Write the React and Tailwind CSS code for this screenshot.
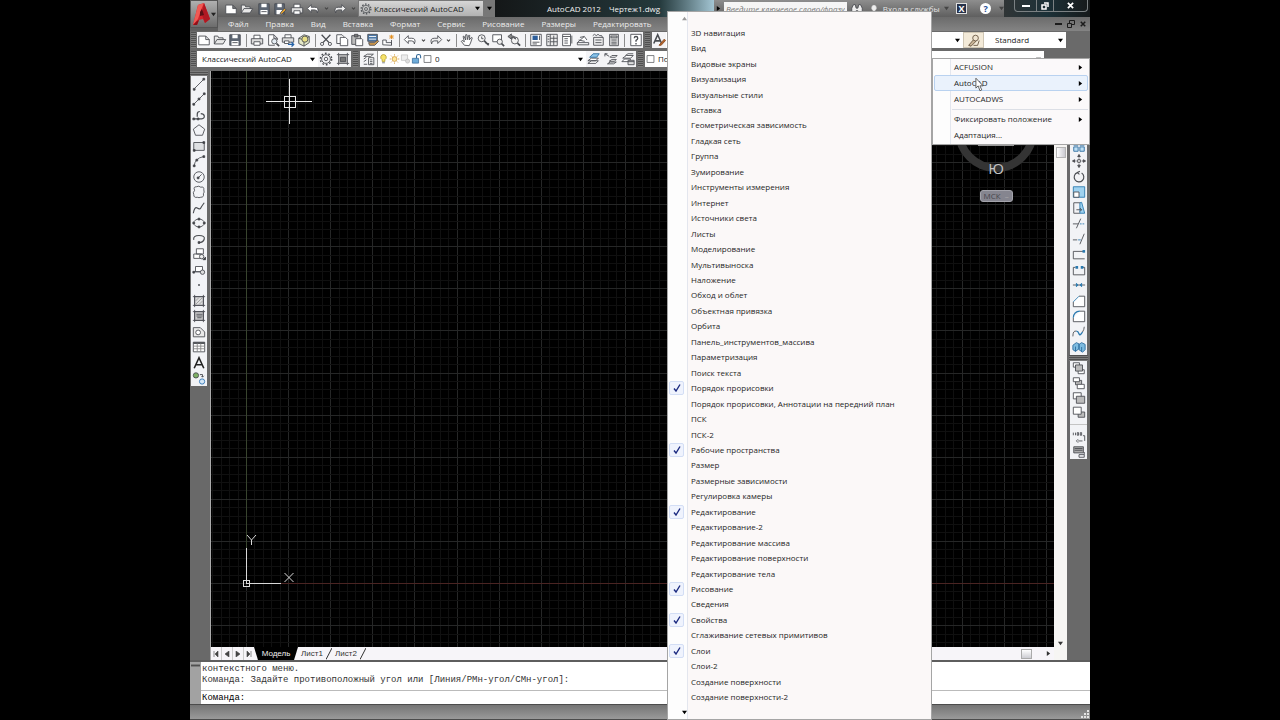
import { ChevronDown } from 'lucide-react';

/**
 * Classic AutoCAD workspace with the toolbar context menu opened
 * over the drawing area.
 */

const ICONS = {
  blank: <path d="M2 3.5h8l4 4v6H2zM10 3.5v4h4" fill="#fff" />,
  open: <path d="M1.5 12.5v-9h4l1 2h5v2M1.5 12.5l3-5h10l-3 5z" fill="#e8e8e8" />,
  save: <><path d="M2 2h12v12H2z" fill="#5d6673" /><path d="M5 2h6v4H5zM4 9h8v5H4z" fill="#fff" stroke="none" /><path d="M5 11h6" /></>,
  saveAs: <><path d="M2 2h11v12H2z" fill="#5d6673" /><path d="M5 2h5v4H5zM4 9h7v5H4z" fill="#fff" stroke="none" /><path d="M8 13l5-6 2 2-5 5z" fill="#e0a030" /></>,
  print: <><path d="M4.5 7V2.5h7V7" fill="#fff" /><path d="M1.5 6.5h13v6h-13z" fill="#ddd" /><path d="M4.5 10h7v4h-7z" fill="#fff" /></>,
  preview: <><path d="M10 14H3V2h6l4 4v2M9 2v4h4" fill="#fff" /><circle cx="9.500" cy="9.500" r="3" fill="#e6eef5" /><path d="M12 12l3 3" strokeWidth="2" /></>,
  plot: <><path d="M4.500 6V2h7v4" fill="#fff" /><path d="M1.500 5.500h13v5h-13z" fill="#ddd" /><path d="M4 9h5v3H4z" fill="#fff" /><path d="M8 13h6M12 10.500l2.500 2.500-2.500 2.500" stroke="#2563a8" strokeWidth="1.500" /></>,
  dwf: <><path d="M2 6l6-4 6 2v7l-6 4-6-3z" fill="#e5e9c8" /><path d="M2 6l6 2 6-4M8 8v7" /><circle cx="9" cy="7" r="3.500" fill="#e9df85" /></>,
  cut: <><path d="M3 2l8.500 9M13 2L4.500 11" strokeWidth="1.500" /><circle cx="3.500" cy="12.500" r="1.800" /><circle cx="12.500" cy="12.500" r="1.800" /></>,
  copy: <><path d="M2 2h6l2 2v8H2z" fill="#fff" /><path d="M6 5h6l2.500 2.500V14.500H6z" fill="#fff" /></>,
  paste: <><path d="M2 3h10v10H2z" fill="#bbb" /><path d="M5 1.500h4v3H5z" fill="#777" /><path d="M6.500 6.500h7l1 1v7h-8z" fill="#fff" /></>,
  match: <><path d="M2 1.500h11v8H2z" fill="#4c79a8" /><path d="M3.500 4h8M3.500 7h8" stroke="#fff" /><path d="M3 11h7l3-3 1.500 1.500L10 14H4z" fill="#d49a48" /></>,
  block: <><path d="M2 13.500V8h4v3h6v3zM12 8v6" fill="#fff" /><path d="M12 2v5M9.500 4.500h5M10 2.500l4 4M14 2.500l-4 4" stroke="#e08a18" /></>,
  undo: <path d="M6 3L1.500 7.500 6 12V9h4q3 0 3 3.500Q15.500 6 10 6H6z" fill="#fff" />,
  redo: <path d="M10 3l4.500 4.500L10 12V9H6q-3 0-3 3.500Q.5 6 6 6h4z" fill="#eee" />,
  pan: <path d="M5 14L1.500 9.500l1-1L5 10 3.500 4l1-.5L6.500 8 6.500 2h1.500l.5 5.500L10 2.500l1.200.3-.7 5.200L13 5l1 .5-2 6-1.500 3z" fill="#fff" />,
  zoom: <><circle cx="6.500" cy="6" r="4" fill="#f4f4f4" /><path d="M9.500 9l5 5" strokeWidth="2" /><path d="M6.500 4v2.500h2M11 12h4" /></>,
  zoomWindow: <><path d="M2 2h10v8H2z" fill="#fff" /><circle cx="10" cy="10" r="3" fill="#eee" /><path d="M12 12l3 3" strokeWidth="2" /></>,
  zoomPrev: <><circle cx="9" cy="8.500" r="4" fill="#f4f4f4" /><path d="M12 11.500l3 3" strokeWidth="2" /><path d="M1 4l4-3v2q4 0 5 4-2-2-5-2v2z" fill="#888" /></>,
  props: <><path d="M2 1.500h12v13H2z" fill="#fff" /><path d="M4 3h6v5H4z" fill="#2d5e9b" stroke="none" /><path d="M4 10.500h8M4 12.500h5M12 3v5" /></>,
  design: <><path d="M2 1.500h12v13H2z" fill="#ececec" /><path d="M6 1.500v13M6 6h8M6 10h8M10 3v11M3 4h2M3 7h2M3 10h2" /></>,
  palette: <><path d="M3 1.500h9v13H3zM3 4h9" fill="#fff" /><path d="M5 6.500h4M5 9h4M5 11.500h4M13.500 3v9" /></>,
  sheet: <path d="M1.500 11l8-7 3 4M1.500 11h13v2.500h-13zM3 8l7 1.500M9.500 4l-5 1" fill="#fff" />,
  markup: <><path d="M3 5h11v9H3z" fill="#eee" /><path d="M2 3q2-3 4 0 2-3 4 0 3-1 3 2M5 8h7M5 11h7" /></>,
  calc: <><path d="M3 1.500h10v13H3z" fill="#ddd" /><path d="M4.500 3.500h7v2h-7zM5 8h6M5 10.500h6M5 12.500h6" /></>,
  help: <><path d="M2 1.500h12v13H2z" fill="#fff" /><path d="M6 6q0-2 2-2t2 2q0 1.500-2 2.500v1.500M8 11.500v1.500" strokeWidth="1.500" /></>,
  textStyle: <><path d="M2 12L6.500 2 11 12M3.500 9h6" strokeWidth="1.800" /><path d="M8 14l6-7 1.500 1.500-5 5.500z" fill="#b5652b" stroke="#8b4a20" /></>,
  gear: <><circle cx="8" cy="8" r="5" strokeWidth="1" /><circle cx="8" cy="8" r="6.500" strokeDasharray="2 2.080" strokeWidth="1.600" /><circle cx="8" cy="8" r="2" /></>,
  wsSave: <><path d="M3 3h10v10H3z" fill="#bbb" /><path d="M5 6h6v5H5z" fill="#777" /><path d="M1 3h2M1 13h2M13 3h2M13 13h2M3 1v2M13 1v2M3 13v2M13 13v2" /></>,
  layers: <><path d="M2 5l4-2.500h7L10 5zM2 8l3-2M2 11l3-2M2 14h4" fill="#fff" /><path d="M7.500 6.500h6v8h-6zM9 9h3M9 11h3M9 13h3" fill="#fff" /></>,
  bulb: <><path d="M8 1.500a4 4 0 0 1 2 7.500v2.500H6V9a4 4 0 0 1 2-7.500z" fill="#f6e36b" stroke="#a88f20" /><path d="M6 13.500h4" /></>,
  sun: <><circle cx="8" cy="8" r="3.500" fill="#ffe9a0" stroke="#c98a25" /><path d="M8 1v2M8 13v2M1 8h2M13 8h2M3 3l1.500 1.500M11.500 11.500L13 13M3 13l1.500-1.500M11.500 4.500L13 3" stroke="#c98a25" /></>,
  freeze: <><path d="M2 2h9v8H2z" fill="#eee" stroke="#bbb" /><circle cx="11" cy="11" r="3" fill="#ddd" stroke="#bbb" /></>,
  lock: <><path d="M2 7h9v7H2z" fill="#6eabd8" stroke="#2d6393" /><path d="M8 7V4q0-2.500 3-2.500T14 4v3" stroke="#2d6393" strokeWidth="1.500" /></>,
  square: <path d="M3 3h10v10H3z" fill="#fff" />,
  layerBlue: <><path d="M1 13l4-3h8l-3 3zM1 10l4-3h8l-3 3z" fill="#fff" /><path d="M3 6l4-4h7l-3 4z" fill="#8cc5ea" stroke="#2a6b9e" /></>,
  layerPrev: <><path d="M4 13.500l3-2h7l-3 2zM6 10.500l3-2h5l-2 2zM7 6l2-2h6l-2 2z" fill="#fff" /><path d="M1 2l5 3M1 2h3M1 2v3" /></>,
  layerState: <><path d="M1 11l3-3h7l-2 3zM2 7l4-3h8l-3 3zM5 4l3-2h6" fill="#fff" /><path d="M8 9.500h7v5H8zM8 11h7" fill="#ddd" /></>,
  line: <><path d="M3 13L13 3" /><path d="M1.500 13h2v2h-2zM12.500 1.500h2v2h-2z" fill="#333" /></>,
  xline: <><path d="M2 14L14 2" /><path d="M1 13h2v2H1zM7 7h2v2H7zM13 1h2v2h-2z" fill="#333" /></>,
  pline: <><path d="M2 12.500h9q3.500-.5 3-3.500-.5-2.500-4-2.500M6 10V7Q6 4 9 4" strokeWidth="1.400" /><path d="M1 11.500h2v2H1zM6 11.500h2v2H6z" fill="#333" /></>,
  polygon: <path d="M8 2l6.500 5-2.500 7H4L1.500 7z" />,
  rect: <><path d="M2 4h12v9H2z" fill="#dfe1e3" /><path d="M1.500 12h2v2h-2zM12.500 3h2v2h-2z" fill="#333" /></>,
  arc: <><path d="M2.500 14Q3 5 13 3" /><path d="M1.500 12.500h2v2h-2zM4.500 6h2v2h-2zM12.500 2h2v2h-2z" fill="#333" /></>,
  circle: <><circle cx="8" cy="8" r="6" /><path d="M7 9l4-4" /><path d="M6 8h2v2H6z" fill="#333" /></>,
  cloud: <path d="M3 6q-2-4 2-4 3-1.500 5 .5 4-1 3.500 3 1 3-.5 4.500 1 4-3 4-2 1-4 0-4 1-4-3-1.500-2 1-5z" />,
  spline: <path d="M1.500 14Q3 6 6 8t4 0 4-6" strokeWidth="1.300" />,
  ellipse: <><ellipse cx="8" cy="8" rx="6" ry="4.500" /><path d="M1 7h2v2H1zM13 7h2v2h-2zM7 2.500h2v2H7zM7 11.500h2v2H7z" fill="#333" /></>,
  ellipseArc: <><path d="M2 9Q1 4 8 4t6 4-6 4" strokeWidth="1.300" /><path d="M7 11h2v2H7z" fill="#333" /></>,
  insert: <><path d="M5 2h8v6H5zM2 8h9v5H2z" fill="#fff" /><circle cx="11" cy="11" r="2.500" fill="#eee" /><path d="M12.500 14.500h3v-3z" fill="#000" /></>,
  makeBlock: <><path d="M4 4h8v6H4zM1.500 10h8" fill="#fff" /><circle cx="12" cy="10.500" r="2.500" fill="#ddd" /><path d="M1 9.500h2v2H1z" fill="#333" /></>,
  point: <path d="M7.500 7.500h1v1h-1z" fill="#333" />,
  hatch: <><path d="M3 3h10v10H3z" fill="#ddd" /><path d="M1 3h14M1 13h14M3 1v14M13 1v14" /><path d="M4 8l4-4M4 12l8-8M8 12l4-4" stroke="#999" /></>,
  gradient: <><path d="M3 3h10v10H3z" fill="#ccc" /><path d="M1 3h14M1 13h14M3 1v14M13 1v14M5 6h7M5 8h7M6 10h5" /></>,
  region: <><path d="M1.500 3h8l5 5v5.500h-13z" fill="#e9e9e9" /><circle cx="7" cy="8.500" r="2.700" fill="#fff" /></>,
  table: <><path d="M1.500 2.500h13v11h-13z" fill="#fff" /><path d="M1.500 3.500h13" strokeWidth="2" /><path d="M1.500 7h13M1.500 10h13M6 4v9.500M10 4v9.500" stroke="#888" /></>,
  text: <path d="M2.500 14L8 2l5.500 12M4.500 10h7" strokeWidth="1.800" stroke="#222" />,
  addSelected: <><circle cx="4.500" cy="5" r="3" fill="#7db064" /><circle cx="11.500" cy="12" r="3" fill="#d7e9f8" stroke="#2d74b5" /><path d="M9 4h3v3M10.500 5.500L12 7l1.500-1.500" /></>,
  array: <path d="M2 2h5v5H2zM9 2h5v5H9zM2 9h5v5H2zM9 9h5v5H9z" fill="#bfe0f5" stroke="#2a6b9e" />,
  move: <><path d="M8 2v12M2 8h12" strokeDasharray="2 1" /><path d="M8 .5L9.500 3h-3zM8 15.500L9.500 13h-3zM.5 8L3 6.500v3zM15.500 8L13 6.500v3z" fill="#333" /><path d="M6.500 6.500h3v3h-3z" fill="#fff" /></>,
  rotate: <path d="M6 3a5.500 5.500 0 1 0 5 0.500M6 3l3-1.500M6 3l2.500 2" strokeWidth="1.300" />,
  scale: <><path d="M1.500 2h13v12h-13z" fill="#9fd2f0" stroke="#2a7ab0" /><path d="M2 8h6v6H2z" fill="#fff" /></>,
  stretch: <><path d="M9 2l2-.5L14.500 14H9z" fill="#9fd2f0" stroke="#2a7ab0" /><path d="M9 2H2v12h7M5 10h6M9 8l2 2-2 2" /></>,
  trim: <><path d="M1 9h6M5 14L10 3" /><path d="M9 9h2M12 9h2" stroke="#2a7ab0" /></>,
  extend: <><path d="M1 9h5M9 14l5-12" /><path d="M7 9h3" stroke="#2a7ab0" /></>,
  breakAt: <><path d="M1.500 13.500V5H14M1.500 13.500h13" /><path d="M12 3.500h3v3h-3z" fill="#2a7ab0" stroke="none" /></>,
  breakLine: <><path d="M4 5H1.500v8.500h13V5H12" /><path d="M4 3.500h3v3H4zM10 3.500h3v3h-3z" fill="#2a7ab0" stroke="none" /></>,
  join: <><path d="M1 8h14" /><path d="M5 6L7 8l-2 2zM11 6L9 8l2 2z" fill="#2a7ab0" stroke="#2a7ab0" /></>,
  chamfer: <><path d="M8 2.500h6.500v12h-13V9" fill="#fff" /><path d="M1.500 9L8 2.500" stroke="#2a7ab0" /></>,
  fillet: <><path d="M9 2.500h5.500v12h-13V10" fill="#fff" /><path d="M1.500 10Q2 3 9 2.500" stroke="#2a7ab0" strokeWidth="1.300" /></>,
  blend: <><path d="M1 13q0-7 4-6" /><path d="M5 7q2 0 3 3t4-2" stroke="#2a7ab0" strokeWidth="1.500" /><path d="M12 8q2-3 2-6" /></>,
  explode: <path d="M1 6l4-3 3 1.500V10l-4 3-3-2zM8 5l3-2 4 2v6l-3 3-4-3zM11 8v5M4 7.500V13" fill="#7dbbe0" stroke="#2a6b9e" />,
  front: <><path d="M1.500 2h7v5h-7zM7 10h7v4.500H7z" fill="#fff" /><path d="M4 4.500h8v7H4z" fill="#bbb" /></>,
  back: <><path d="M4 5h7v5H4z" fill="#bbb" /><path d="M1.500 2h7v4.500h-7zM6 9.500h8v5H6z" fill="#fff" /></>,
  above: <><path d="M1.500 2h9v7h-9z" fill="#fff" /><path d="M5 6h9.500v8H5z" fill="#bbb" /></>,
  under: <><path d="M7 8h7.500v6H7z" fill="#bbb" /><path d="M1.500 2.500h9v8h-9z" fill="#fff" /></>,
  annoFront: <><path d="M1.500 3v3M4 3v3M6 3h1.500v3H6zM9.500 3H11v3H9.500z" /><path d="M12.500 6.500h2v6M7 12.500h5M7 10.500l-2 2 2 2" /></>,
  hatchBack: <><path d="M2 2h11v7H2z" fill="#aaa" /><path d="M3 4h9M3 6h9M8 11h6v3H8zM14 8v3" /></>,
  binoculars: <path d="M2 13V7l2-4h2l1 4h2l1-4h2l2 4v6H9v-3H7v3z" fill="#eee" />,
  key: <path d="M5 7a3 4 0 1 1 6 0q0 2-2 3v4H7v-4Q5 9 5 7z" fill="#eee" stroke="#ddd" />,
};

const QUICK = ['blank', 'open', 'save', 'saveAs', 'print', 'undo', '>', 'redo', '>'];
const STANDARD = [
  'blank', 'open', 'save', '|', 'print', 'preview', 'plot', 'dwf', '|',
  'cut', 'copy', 'paste', 'match', 'block', '|', 'undo', '>', 'redo', '>', '|',
  'pan', 'zoom', 'zoomWindow', 'zoomPrev', '|',
  'props', 'design', 'palette', 'sheet', 'markup', 'calc', '|', 'help',
];
const DRAW = [
  'line', 'xline', 'pline', 'polygon', 'rect', 'arc', 'circle', 'cloud', 'spline', 'ellipse',
  'ellipseArc', 'insert', 'makeBlock', 'point', 'hatch', 'gradient', 'region', 'table', 'text', 'addSelected',
];
const MODIFY = [
  'cut', 'copy', 'front', 'back', 'array', 'move', 'rotate', 'scale', 'stretch', 'trim',
  'extend', 'breakAt', 'breakLine', 'join', 'chamfer', 'fillet', 'blend', 'explode',
];
const ORDER = ['front', 'back', 'above', 'under', '-', 'annoFront', 'hatchBack'];

const MENUBAR = ['Файл', 'Правка', 'Вид', 'Вставка', 'Формат', 'Сервис', 'Рисование', 'Размеры', 'Редактировать', 'Параметры'];

const TOOLBARS = [
  '3D навигация', 'Вид', 'Видовые экраны', 'Визуализация', 'Визуальные стили', 'Вставка',
  'Геометрическая зависимость', 'Гладкая сеть', 'Группа', 'Зумирование', 'Инструменты измерения',
  'Интернет', 'Источники света', 'Листы', 'Моделирование', 'Мультивыноска', 'Наложение',
  'Обход и облет', 'Объектная привязка', 'Орбита', 'Панель_инструментов_массива', 'Параметризация',
  'Поиск текста', 'Порядок прорисовки', 'Порядок прорисовки, Аннотации на передний план', 'ПСК',
  'ПСК-2', 'Рабочие пространства', 'Размер', 'Размерные зависимости', 'Регулировка камеры',
  'Редактирование', 'Редактирование-2', 'Редактирование массива', 'Редактирование поверхности',
  'Редактирование тела', 'Рисование', 'Сведения', 'Свойства', 'Сглаживание сетевых примитивов',
  'Слои', 'Слои-2', 'Создание поверхности', 'Создание поверхности-2',
];
const CHECKED = ['Порядок прорисовки', 'Рабочие пространства', 'Редактирование', 'Рисование', 'Свойства', 'Слои'];

function Glyph({ name, className = 'h-[14px] w-[14px]' }) {
  return (
    <svg viewBox="0 0 16 16" className={`shrink-0 ${className}`} fill="none" stroke="#4a4d52" strokeWidth="1" aria-hidden>
      {ICONS[name]}
    </svg>
  );
}

function Triangle({ className = '', points = '0,1 6,1 3,5' }) {
  return (
    <svg viewBox="0 0 6 6" className={`h-[5px] w-[5px] shrink-0 ${className}`} fill="currentColor" aria-hidden>
      <polygon points={points} />
    </svg>
  );
}

function Tool({ name }) {
  if (name === '|') {
    return <span className="flex w-[5px] justify-center"><span className="h-[13px] w-px bg-[#8c8c8c]" /></span>;
  }
  if (name === '-') return <span className="my-1 h-px w-full bg-[#c4c4c4]" />;
  if (name === '>') {
    return (
      <button type="button" aria-label="more" className="flex w-2 justify-center text-[#444]">
        <ChevronDown size={5} strokeWidth={5} />
      </button>
    );
  }
  return (
    <button type="button" aria-label={name} className="flex items-center justify-center">
      <Glyph name={name} />
    </button>
  );
}

function Gripper({ className = 'h-[16px] w-[5px]' }) {
  return <span className={`shrink-0 bg-[repeating-linear-gradient(0deg,#7c7c7c_0_1px,#505050_1px_2px)] ${className}`} />;
}

function Combo({ label, options, className = '', children }) {
  return (
    <label className={`flex h-full items-center pr-[3px] ${className}`}>
      {children}
      <select aria-label={label} className="h-full min-w-0 flex-1 appearance-none truncate bg-transparent pl-[2px] text-[8px] leading-[14px] text-[#222] outline-none">
        {options.map((o) => <option key={o}>{o}</option>)}
      </select>
      <Triangle className="text-black" />
    </label>
  );
}

function TitleBar() {
  return (
    <div className="flex h-[17px] items-center bg-linear-to-b from-[#8e8e8e] to-[#5f5f5f] text-[8px]">
      <div className="flex w-[139px] shrink-0 items-center justify-between pl-[6px]">
        {QUICK.map((name, i) => <Tool key={i} name={name} />)}
      </div>
      <Combo label="Рабочее пространство" options={['Классический AutoCAD']} className="ml-px w-[126px] border border-[#777] bg-linear-to-b from-[#d6d6d6] to-[#b2b2b2]">
        <Glyph name="gear" className="ml-px h-[12px] w-[12px]" />
      </Combo>
      <button type="button" aria-label="Настройка панели" className="flex h-full w-[11px] items-center justify-center bg-[#777] text-black"><Triangle /></button>
      <div className="flex h-full min-w-0 flex-1 items-center bg-linear-to-r from-[#141718] via-[#24393c] via-75% to-[#a4c6d4]">
        <h1 className="ml-[52px] flex gap-2 whitespace-nowrap text-[8px] text-[#f2f2f2]">
          <span>AutoCAD 2012</span>
          <span>Чертеж1.dwg</span>
        </h1>
      </div>
      <div className="flex h-full w-[290px] shrink-0 items-center bg-linear-to-b from-[#8e8e8e] to-[#5f5f5f] text-[#e4e4e4]">
        <Triangle className="ml-[2px] text-black" points="1,0 5,3 1,6" />
        <input aria-label="Поиск" placeholder="Введите ключевое слово/фразу" className="ml-[3px] h-[14px] w-[126px] bg-[#f5f5f5] px-[2px] text-[8px] italic text-[#555] outline-none placeholder:text-[#777]" />
        <Glyph name="binoculars" className="ml-[3px] h-[14px] w-[14px]" />
        <Glyph name="key" className="ml-[4px] h-[12px] w-[12px]" />
        <a href="#signin" className="ml-[3px] whitespace-nowrap">Вход в службы</a>
        <Triangle className="ml-1 text-[#444]" />
        <button type="button" aria-label="Exchange" className="ml-[7px] flex h-[11px] w-[12px] items-center justify-center border border-[#e0e0e0] bg-[#27324a] text-[9px] font-bold leading-none text-white">X</button>
        <button type="button" aria-label="Справка" className="ml-[13px] flex h-[11px] w-[11px] items-center justify-center rounded-full bg-white text-[9px] font-bold leading-none text-[#1e4d96]">?</button>
        <Triangle className="ml-2 text-[#444]" />
      </div>
      <div className="flex h-full w-[86px] shrink-0 items-start bg-linear-to-r from-[#303536] via-[#1c3138] to-[#15191a] pl-[10px] text-white">
        <div className="flex h-[12px] w-[74px] items-stretch rounded-b border border-t-0 border-[#7b8183]">
          <button type="button" aria-label="Свернуть" className="flex w-[21px] items-center justify-center"><span className="h-[2px] w-[8px] bg-white" /></button>
          <button type="button" aria-label="Развернуть" className="flex w-[18px] items-center justify-center border-x border-[#7b8183]">
            <svg viewBox="0 0 8 8" className="h-[8px] w-[8px]" fill="none" stroke="currentColor" strokeWidth="1.500"><path d="M1 3h4v4H1zM3 1h4v4" /></svg>
          </button>
          <button type="button" aria-label="Закрыть" className="flex flex-1 items-center justify-center">
            <svg viewBox="0 0 8 8" className="h-[7px] w-[7px]" stroke="currentColor" strokeWidth="2"><path d="M1 1l6 6M7 1L1 7" /></svg>
          </button>
        </div>
      </div>
    </div>
  );
}

function Header() {
  return (
    <header className="flex items-start bg-[#606060]">
      <button type="button" aria-label="Меню приложения" className="flex h-[28px] w-[28px] shrink-0 items-center border border-[#555] bg-linear-to-b from-[#b0b0b0] to-[#6c6c6c]">
        <svg viewBox="0 0 20 26" className="h-[26px] w-[20px]" aria-hidden>
          <path d="M2 24L7 4l6-2 6 16-5 4-2-4-4 1-2 5z" fill="#d0242c" />
          <path d="M7 4l6-2-3 7-3 9-5 6z" fill="#f05a54" />
          <path d="M13 2l6 16-5 4-3-8z" fill="#b01822" />
          <path d="M9 11l2-3 2 6-4 1z" fill="#5c1016" />
          <path d="M2 24l4-4 2-1-2 5z" fill="#8f1019" />
        </svg>
        <Triangle className="text-[#222]" />
      </button>
      <div className="min-w-0 flex-1">
        <TitleBar />
        <nav className="flex h-[14px] items-center bg-linear-to-b from-[#6b6b6b] to-[#848484] pr-1 text-[8px] text-[#ececec]">
          <div className="flex min-w-0 flex-1 gap-[17px] overflow-hidden pl-[10px]">
            {MENUBAR.map((m) => <button key={m} type="button" className="leading-[14px]">{m}</button>)}
          </div>
          <div className="flex items-center gap-[5px] text-[#1c1c1c]">
            <button type="button" aria-label="Свернуть чертеж"><span className="block h-[2px] w-[7px] bg-[#1c1c1c]" /></button>
            <button type="button" aria-label="Восстановить чертеж">
              <svg viewBox="0 0 8 8" className="h-[8px] w-[8px]" fill="none" stroke="currentColor"><path d="M.5 3.500h4v4h-4zM2.500 3V.5h5v4H5" /></svg>
            </button>
            <button type="button" aria-label="Закрыть чертеж">
              <svg viewBox="0 0 8 8" className="h-[6px] w-[6px]" stroke="currentColor" strokeWidth="2"><path d="M1 1l6 6M7 1L1 7" /></svg>
            </button>
          </div>
        </nav>
      </div>
    </header>
  );
}

function Toolbars() {
  return (
    <div className="flex flex-col gap-[3px] bg-[#6a6a6a] pb-[4px] pt-px">
      <div className="flex h-[16px] items-stretch">
        <Gripper className="ml-px mr-px w-[5px]" />
        <div className="flex w-[446px] shrink-0 items-center justify-between bg-[#f4f4f6]">
          {STANDARD.map((name, i) => <Tool key={i} name={name} />)}
        </div>
        <Gripper className="mx-[2px] w-[5px]" />
        <div className="flex shrink-0 items-center bg-[#f4f4f6]"><Tool name="textStyle" /></div>
        <Combo label="Стиль текста" options={['']} className="min-w-0 flex-1 bg-white" />
        <div className="flex w-[21px] shrink-0 items-center justify-center border border-[#cfc6b4] bg-[#f3ead8]">
          <svg viewBox="0 0 16 16" className="h-[13px] w-[13px]" fill="none" stroke="#5c4a35" aria-hidden>
            <path d="M2 14l6-7 3 2-6 6z" fill="#c9b497" /><circle cx="10.500" cy="5" r="3.500" fill="#efe4d0" /><path d="M8 14h5l2-6" />
          </svg>
        </div>
        <Combo label="Стиль размера" options={['Standard']} className="mr-[24px] w-[82px] shrink-0 bg-white pl-[9px]" />
      </div>
      <div className="flex h-[16px] items-stretch">
        <Gripper className="ml-px mr-px w-[5px]" />
        <Combo label="Рабочие пространства" options={['Классический AutoCAD']} className="w-[121px] shrink-0 bg-white pl-[3px]" />
        <div className="flex w-[33px] shrink-0 items-center justify-around bg-[#f4f4f6]"><Tool name="gear" /><Tool name="wsSave" /></div>
        <Gripper className="mx-[2px] w-[5px]" />
        <div className="flex w-[17px] shrink-0 items-center justify-center bg-[#f4f4f6]"><Tool name="layers" /></div>
        <Combo label="Слой" options={['0']} className="w-[209px] shrink-0 border-l border-[#999] bg-white">
          {['bulb', 'sun', 'freeze', 'lock', 'square'].map((n) => <Glyph key={n} name={n} className="h-[12px] w-[11px]" />)}
        </Combo>
        <div className="flex w-[50px] shrink-0 items-center justify-around bg-[#f4f4f6]">
          <Tool name="layerBlue" /><Tool name="layerPrev" /><Tool name="layerState" />
        </div>
        <Gripper className="mx-[2px] w-[5px]" />
        <Combo label="Цвет" options={['Послою']} className="w-[170px] shrink-0 bg-white"><Glyph name="square" className="h-[12px] w-[11px]" /></Combo>
        <Combo label="Тип линий" options={['Послою']} className="mr-[46px] min-w-0 flex-1 border-l border-[#777] bg-white" />
      </div>
    </div>
  );
}

function Rail({ names, className }) {
  return (
    <div className={`mx-px flex flex-col items-center justify-around bg-[#f2f3f6] ${className}`}>
      {names.map((name) => <Tool key={name} name={name} />)}
    </div>
  );
}

const ORIGIN = { x: 35, y: 512 };
const STEP = 8.42; // grid spacing, every fifth line is major
const MAJOR = '#262727';
const MINOR = '#101010';

function Grid() {
  const vertical = [];
  const horizontal = [];
  for (let i = -4; i < 300; i++) vertical.push([i, ORIGIN.x + Math.round(i * STEP)]);
  for (let i = -100; i < 61; i++) horizontal.push([i, ORIGIN.y + Math.round(i * STEP)]);
  const ordered = (lines) => [...lines].sort((a, b) => (a[0] % 5 === 0) - (b[0] % 5 === 0));

  return (
    <svg className="block h-full w-full" shapeRendering="crispEdges" aria-hidden>
      {ordered(vertical).map(([i, x]) => <rect key={i} x={x} y="0" width="1" height="100%" fill={i % 5 ? MINOR : MAJOR} />)}
      {ordered(horizontal).map(([i, y]) => <rect key={i} x="0" y={y} width="100%" height="1" fill={i % 5 ? MINOR : MAJOR} />)}
      <rect x={ORIGIN.x} y="0" width="1" height={ORIGIN.y} fill="#38442e" />
      <rect x={ORIGIN.x} y={ORIGIN.y} width="100%" height="1" fill="#4a2422" />

      {/* UCS icon */}
      <g fill="none" stroke="#d8d8d8">
        <path d="M35.500 477v35.500H70M32.500 509.500h6v6h-6z" />
        <path d="M36 464l4.500 5 4.500-5M40.500 469v5M73.500 502l9 9M82.500 502l-9 9" shapeRendering="auto" />
      </g>

      {/* Crosshair */}
      <g fill="none" stroke="#e8e8e8">
        <path d="M55 30.500h46M78.500 8v45" />
        <path d="M73 25h11v11H73z" />
      </g>
    </svg>
  );
}

function Drawing() {
  return (
    <div className="relative min-h-0 flex-1 overflow-hidden bg-black">
      <div className="absolute inset-0"><Grid /></div>
      <div className="absolute right-[16px] top-[18px] flex w-[84px] flex-col items-center">
        <svg viewBox="0 0 84 84" className="h-[84px] w-[84px]" aria-hidden>
          <circle cx="42" cy="42" r="37" fill="none" stroke="#343434" strokeWidth="8" />
          <rect x="24" y="20" width="36" height="37" fill="#999" />
        </svg>
        <span className="-mt-[15px] text-[15px] leading-[20px] text-[#c4c4c4]">Ю</span>
        <button type="button" className="mt-[12px] flex h-[12px] w-[33px] items-center gap-1 rounded-[3px] border border-[#a4a4ac] bg-[#85858f] pl-[3px] text-[8px] leading-none text-[#45454d]">МСК<span className="text-[#aaa]">–</span></button>
      </div>
    </div>
  );
}

function SheetTabs() {
  return (
    <div className="flex h-[13px] shrink-0 items-center bg-[#f7f5f9] font-['Liberation_Sans',sans-serif] text-[8px] text-[#333]">
      <div className="flex h-full w-[43px] items-center divide-x divide-[#ccc] text-[#444]">
        {['M1 0v6M5 0L2 3l3 3z', 'M5 0L1 3l4 3z', 'M1 0l4 3-4 3z', 'M1 0l3 3-3 3zM5 0v6'].map((d) => (
          <button key={d} type="button" aria-label="Листать листы" className="flex h-full flex-1 items-center justify-center">
            <svg viewBox="0 0 6 6" className="h-[6px] w-[6px]" fill="currentColor" stroke="currentColor" strokeWidth=".6"><path d={d} /></svg>
          </button>
        ))}
      </div>
      <button type="button" className="h-full w-[44px] bg-black leading-[13px] text-[#f0f0f0] [clip-path:polygon(0_0,100%_0,91%_100%,9%_100%)]">Модель</button>
      {['Лист1', 'Лист2'].map((t) => (
        <div key={t} className="flex h-full items-center">
          <button type="button" className="w-[28px] text-center">{t}</button>
          <svg viewBox="0 0 6 13" className="h-[13px] w-[6px]" stroke="#333" aria-hidden><path d="M0 12.500L6 1" /></svg>
        </div>
      ))}
      <span className="flex-1" />
      <span className="mr-[14px] h-[10px] w-[11px] border border-[#aaa] bg-linear-to-b from-white to-[#ccccd2]" />
      <Triangle className="mr-[3px] text-[#333]" points="1,0 5,3 1,6" />
    </div>
  );
}

function Workspace() {
  return (
    <div className="flex min-h-0 flex-1 bg-[#696969]">
      <aside className="w-[18px] shrink-0">
        <Gripper className="block h-[5px] w-full" />
        <Rail names={DRAW} className="h-[310px]" />
      </aside>
      <div className="ml-[2px] flex min-w-0 flex-1 border-l border-[#aaa]">
        <div className="flex min-w-0 flex-1 flex-col">
          <Drawing />
          <SheetTabs />
        </div>
        <div className="flex w-[13px] shrink-0 flex-col items-center bg-[#f6f5f3] pb-[14px] pt-[76px]">
          <span className="h-[11px] w-[10px] border border-[#b5b5b5] bg-linear-to-r from-white to-[#cacad0]" />
          <span className="flex-1" />
          <Triangle className="text-[#333]" />
        </div>
      </div>
      <aside className="ml-[2px] w-[21px] shrink-0 pr-[2px]">
        <Gripper className="block h-[5px] w-full" />
        <Rail names={MODIFY} className="h-[279px]" />
        <Gripper className="block h-[6px] w-full" />
        <Rail names={ORDER} className="h-[98px]" />
      </aside>
    </div>
  );
}

function CommandLine() {
  return (
    <section className="mt-[2px] flex h-[42px] shrink-0 bg-white font-['Liberation_Mono',monospace] text-[9px] text-[#333]">
      <div className="w-[11px] shrink-0 bg-[#a2a2a2] px-px pt-[2px]"><Gripper className="block h-[3px] w-full" /></div>
      <div className="flex min-w-0 flex-1 flex-col">
        <div className="flex-1 whitespace-nowrap pl-px pt-[2px] leading-[11px]">
          <p>контекстного меню.</p>
          <p>Команда: Задайте противоположный угол или [Линия/РМн-угол/СМн-угол]:</p>
        </div>
        <label className="flex h-[14px] items-center border-t border-[#bbb] pl-px text-black">
          Команда:
          <input className="ml-1 h-full min-w-0 flex-1 bg-transparent outline-none" />
        </label>
      </div>
    </section>
  );
}

function StatusBar() {
  return (
    <footer className="flex h-[16px] shrink-0 items-end justify-end border-b border-t border-[#4c4c4c] bg-linear-to-b from-[#757575] to-[#9a9a9a]">
      <svg viewBox="0 0 9 9" className="h-[9px] w-[9px]" fill="#e4e4e4" aria-hidden>
        <path d="M6 0h2v2H6zM3 3h2v2H3zM6 3h2v2H6zM0 6h2v2H0zM3 6h2v2H3zM6 6h2v2H6z" />
      </svg>
    </footer>
  );
}

function ToolbarMenu() {
  return (
    <div className="flex w-[265px] flex-col border border-[#a5a5a5] bg-[linear-gradient(90deg,#fdfdfd_19px,#e3e6ee_19px_20px,#fbf8f8_20px)] text-[#262626]">
      <div className="flex h-[13px] shrink-0 items-center pl-[14px] text-[#999]"><Triangle points="0,5 6,5 3,1" /></div>
      <ul role="menu" className="flex min-h-0 flex-1 flex-col">
        {TOOLBARS.map((name) => {
          const checked = CHECKED.includes(name);
          return (
            <li key={name} role="none" className="min-h-0 flex-1">
              <button type="button" role="menuitemcheckbox" aria-checked={checked} className="flex h-full w-full items-center gap-[7px] pl-px text-left">
                <span className={`flex h-[14px] w-[15px] shrink-0 items-center justify-center rounded-[2px] ${checked ? 'border border-[#d3def5] bg-[#eff3fd]' : ''}`}>
                  {checked && (
                    <svg viewBox="0 0 8 8" className="h-[8px] w-[8px]" fill="none" stroke="#1b2a80" strokeWidth="1.400"><path d="M1 4.500L3 7l4-6.500" /></svg>
                  )}
                </span>
                <span className="whitespace-nowrap">{name}</span>
              </button>
            </li>
          );
        })}
      </ul>
      <div className="flex h-[14px] shrink-0 items-center pl-[14px] text-black"><Triangle /></div>
    </div>
  );
}

function GroupItem({ label, arrow = true, active = false, children }) {
  return (
    <button type="button" role="menuitem" className={`relative flex h-[16px] w-full items-center justify-between rounded-[2px] border pl-[19px] pr-[4px] text-left ${active ? 'border-[#b9d2f0] bg-[#eaf2fc]' : 'border-transparent'}`}>
      {label}
      {arrow && <Triangle className="text-black" points="1,0 5,3 1,6" />}
      {children}
    </button>
  );
}

function GroupMenu() {
  return (
    <div role="menu" className="mt-[47px] w-[158px] self-start border border-[#a5a5a5] bg-[linear-gradient(90deg,#fdfdfd_17px,#e3e6ee_17px_18px,#fbf9fa_18px)] px-px pb-px text-[#262626]">
      <GroupItem label="ACFUSION" />
      <GroupItem label="AutoCAD" active>
        <svg viewBox="0 0 10 16" className="absolute left-[40px] top-px h-[15px] w-[9px]" fill="#fff" stroke="#555" aria-hidden>
          <path d="M1 1v11l2.500-2.500L5.500 15l2-1-2-4.500H9z" />
        </svg>
      </GroupItem>
      <GroupItem label="AUTOCADWS" />
      <div className="mb-px ml-[18px] mt-[2px] h-px bg-[#dcdfe6]" />
      <GroupItem label="Фиксировать положение" />
      <GroupItem label="Адаптация..." arrow={false} />
    </div>
  );
}

export default function App() {
  return (
    <div className="flex h-screen bg-black px-[190px] font-['Open_Sans',sans-serif] text-[8px] leading-[12px]">
      <main className="relative flex min-w-0 flex-1 flex-col overflow-hidden bg-[#5e5e5e]">
        <Header />
        <Toolbars />
        <Workspace />
        <CommandLine />
        <StatusBar />
        <div className="absolute bottom-0 right-0 top-[11px] flex">
          <ToolbarMenu />
          <GroupMenu />
        </div>
      </main>
    </div>
  );
}
